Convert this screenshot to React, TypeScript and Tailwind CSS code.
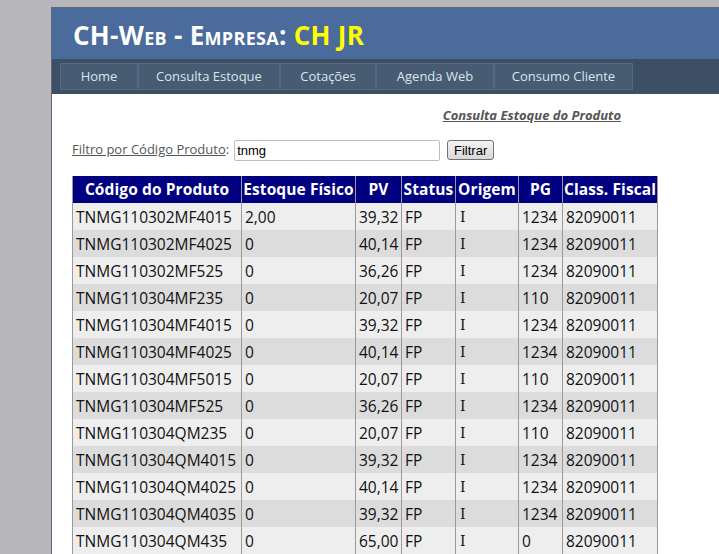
import React from 'react';

type Row = {
  codigo: string;
  estoque: string;
  pv: string;
  status: string;
  origem: string;
  pg: string;
  classFiscal: string;
};

const ROWS: Row[] = [
  { codigo: 'TNMG110302MF4015', estoque: '2,00', pv: '39,32', status: 'FP', origem: 'I', pg: '1234', classFiscal: '82090011' },
  { codigo: 'TNMG110302MF4025', estoque: '0', pv: '40,14', status: 'FP', origem: 'I', pg: '1234', classFiscal: '82090011' },
  { codigo: 'TNMG110302MF525', estoque: '0', pv: '36,26', status: 'FP', origem: 'I', pg: '1234', classFiscal: '82090011' },
  { codigo: 'TNMG110304MF235', estoque: '0', pv: '20,07', status: 'FP', origem: 'I', pg: '110', classFiscal: '82090011' },
  { codigo: 'TNMG110304MF4015', estoque: '0', pv: '39,32', status: 'FP', origem: 'I', pg: '1234', classFiscal: '82090011' },
  { codigo: 'TNMG110304MF4025', estoque: '0', pv: '40,14', status: 'FP', origem: 'I', pg: '1234', classFiscal: '82090011' },
  { codigo: 'TNMG110304MF5015', estoque: '0', pv: '20,07', status: 'FP', origem: 'I', pg: '110', classFiscal: '82090011' },
  { codigo: 'TNMG110304MF525', estoque: '0', pv: '36,26', status: 'FP', origem: 'I', pg: '1234', classFiscal: '82090011' },
  { codigo: 'TNMG110304QM235', estoque: '0', pv: '20,07', status: 'FP', origem: 'I', pg: '110', classFiscal: '82090011' },
  { codigo: 'TNMG110304QM4015', estoque: '0', pv: '39,32', status: 'FP', origem: 'I', pg: '1234', classFiscal: '82090011' },
  { codigo: 'TNMG110304QM4025', estoque: '0', pv: '40,14', status: 'FP', origem: 'I', pg: '1234', classFiscal: '82090011' },
  { codigo: 'TNMG110304QM4035', estoque: '0', pv: '39,32', status: 'FP', origem: 'I', pg: '1234', classFiscal: '82090011' },
  { codigo: 'TNMG110304QM435', estoque: '0', pv: '65,00', status: 'FP', origem: 'I', pg: '0', classFiscal: '82090011' },
];

const NAV = [
  { label: 'Home', w: 'w-[78px]' },
  { label: 'Consulta Estoque', w: 'w-[142px]' },
  { label: 'Cotações', w: 'w-[96px]' },
  { label: 'Agenda Web', w: 'w-[118px]' },
  { label: 'Consumo Cliente', w: 'w-[139px]' },
];

const HEADERS = ['Código do Produto', 'Estoque Físico', 'PV', 'Status', 'Origem', 'PG', 'Class. Fiscal'];

const cell = 'border-x border-[#9a9a9a] pl-[3px] leading-[26px] align-middle whitespace-nowrap';

export default function App() {
  return (
    <div className="w-[719px] h-[554px] overflow-hidden bg-[#b7b7bb] pt-[7px] pl-[51px] font-['Open_Sans',sans-serif]">
      <div className="w-[700px] h-full bg-white border-l border-t border-[#5d6977]">
        {/* Header */}
        <div className="h-[51px] bg-[#4a6b9c] pl-[21px] flex items-center">
          <h1 className="text-[26px] font-bold text-white [font-variant:small-caps] leading-none tracking-[0.3px] translate-y-[1px]">
            CH-Web - Empresa: <span className="text-[#ffff00]">CH JR</span>
          </h1>
        </div>

        {/* Menu */}
        <div className="h-[35px] bg-[#3c4f64] pl-[8px] pt-[4px]">
          <ul className="flex">
            {NAV.map((item) => (
              <li
                key={item.label}
                className={`${item.w} h-[27px] flex items-center justify-center bg-[#475b72] border border-[#56697f] text-[13px] text-[#d9e5f0]`}
              >
                {item.label}
              </li>
            ))}
          </ul>
        </div>

        {/* Content */}
        <div className="pl-[20px]">
          <div className="w-[549px] text-right pt-[10px] leading-[20px]">
            <a className="text-[13px] font-bold italic text-[#555] underline">Consulta Estoque do Produto</a>
          </div>

          <div className="flex items-center mt-[14px] h-[22px]">
            <span className="text-[13px] text-[#555]">
              <span className="underline">Filtro por Código Produto</span>:
            </span>
            <input
              readOnly
              value="tnmg"
              className="ml-[5px] w-[206px] h-[21px] border border-[#b9bec6] rounded-[2px] px-[2px] text-[13px] text-black font-['Liberation_Sans',sans-serif] outline-none"
            />
            <button className="ml-[7px] w-[47px] h-[20px] border border-[#707070] rounded-[3px] bg-gradient-to-b from-[#f4f4f4] to-[#d9d9d9] text-[13px] text-black font-['Liberation_Sans',sans-serif] leading-none">
              Filtrar
            </button>
          </div>

          <table className="mt-[15px] w-[585px] table-fixed border-collapse text-[15.5px]">
            <colgroup>
              <col className="w-[169px]" />
              <col className="w-[114px]" />
              <col className="w-[46px]" />
              <col className="w-[54px]" />
              <col className="w-[63px]" />
              <col className="w-[44px]" />
              <col className="w-[95px]" />
            </colgroup>
            <thead>
              <tr className="h-[27px] bg-[#000080]">
                {HEADERS.map((h) => (
                  <th key={h} className="border-x border-[#9a9a9a] px-0 text-white font-bold text-[15.5px] text-center whitespace-nowrap tracking-[0.1px]">
                    {h}
                  </th>
                ))}
              </tr>
            </thead>
            <tbody>
              {ROWS.map((r, i) => (
                <tr key={r.codigo} className={`h-[27px] ${i % 2 === 0 ? 'bg-[#eeeeee]' : 'bg-[#dcdcdc]'} text-[#111]`}>
                  <td className={cell}>{r.codigo}</td>
                  <td className={cell}>{r.estoque}</td>
                  <td className={cell}>{r.pv}</td>
                  <td className={cell}>{r.status}</td>
                  <td className={`${cell} pl-[4px]`}>
                    <span className="font-['DejaVu_Serif',serif] text-[14px]">{r.origem}</span>
                  </td>
                  <td className={cell}>{r.pg}</td>
                  <td className={cell}>{r.classFiscal}</td>
                </tr>
              ))}
            </tbody>
          </table>
        </div>
      </div>
    </div>
  );
}
